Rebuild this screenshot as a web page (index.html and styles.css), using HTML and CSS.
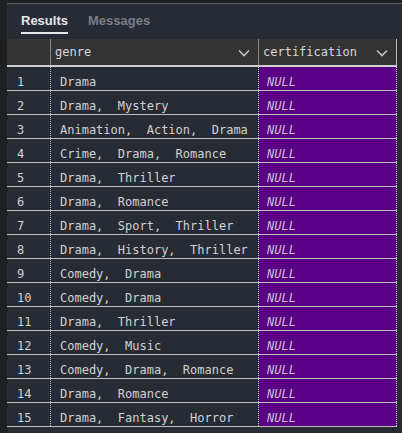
FILE: index.html
```html
<!DOCTYPE html>
<html>
<head>
<meta charset="utf-8">
<link rel="stylesheet" href="styles.css">
</head>
<body>
<div class="panel">
  <div class="tabs">
    <div class="tab active">Results</div>
    <div class="tab">Messages</div>
  </div>
  <div class="grid">
    <div class="hrow">
      <div class="hcell num"></div>
      <div class="hcell genre"><span>genre</span><svg class="chev" width="12" height="8" viewBox="0 0 12 8"><path d="M1 1.5 L6 6.5 L11 1.5" fill="none" stroke="#c4c4c4" stroke-width="1.6"/></svg></div>
      <div class="hcell cert"><span>certification</span><svg class="chev" width="12" height="8" viewBox="0 0 12 8"><path d="M1 1.5 L6 6.5 L11 1.5" fill="none" stroke="#c4c4c4" stroke-width="1.6"/></svg></div>
    </div>
    <div class="row"><div class="cell num">1</div><div class="cell genre">Drama</div><div class="cell cert">NULL</div></div>
    <div class="row"><div class="cell num">2</div><div class="cell genre">Drama,  Mystery</div><div class="cell cert">NULL</div></div>
    <div class="row"><div class="cell num">3</div><div class="cell genre">Animation,  Action,  Drama</div><div class="cell cert">NULL</div></div>
    <div class="row"><div class="cell num">4</div><div class="cell genre">Crime,  Drama,  Romance</div><div class="cell cert">NULL</div></div>
    <div class="row"><div class="cell num">5</div><div class="cell genre">Drama,  Thriller</div><div class="cell cert">NULL</div></div>
    <div class="row"><div class="cell num">6</div><div class="cell genre">Drama,  Romance</div><div class="cell cert">NULL</div></div>
    <div class="row"><div class="cell num">7</div><div class="cell genre">Drama,  Sport,  Thriller</div><div class="cell cert">NULL</div></div>
    <div class="row"><div class="cell num">8</div><div class="cell genre">Drama,  History,  Thriller</div><div class="cell cert">NULL</div></div>
    <div class="row"><div class="cell num">9</div><div class="cell genre">Comedy,  Drama</div><div class="cell cert">NULL</div></div>
    <div class="row"><div class="cell num">10</div><div class="cell genre">Comedy,  Drama</div><div class="cell cert">NULL</div></div>
    <div class="row"><div class="cell num">11</div><div class="cell genre">Drama,  Thriller</div><div class="cell cert">NULL</div></div>
    <div class="row"><div class="cell num">12</div><div class="cell genre">Comedy,  Music</div><div class="cell cert">NULL</div></div>
    <div class="row"><div class="cell num">13</div><div class="cell genre">Comedy,  Drama,  Romance</div><div class="cell cert">NULL</div></div>
    <div class="row"><div class="cell num">14</div><div class="cell genre">Drama,  Romance</div><div class="cell cert">NULL</div></div>
    <div class="row"><div class="cell num">15</div><div class="cell genre">Drama,  Fantasy,  Horror</div><div class="cell cert">NULL</div></div>
  </div>
</div>
</body>
</html>
```

FILE: styles.css
```css
html, body {
  margin: 0;
  padding: 0;
  background: #1f2023;
  height: 100%;
  overflow: hidden;
}

.panel {
  margin-left: 7px;
  margin-top: 3px;
  border-top: 1px solid #5a5d63;
  background: #272b33;
  height: 430px;
}

.tabs {
  display: flex;
  gap: 20px;
  height: 35px;
  padding-left: 14px;
  box-sizing: border-box;
  font-family: "Liberation Sans", Arial, sans-serif;
  font-weight: bold;
  font-size: 13px;
}

.tab {
  color: #7b7f87;
  padding-top: 9px;
  line-height: 15px;
  height: 30px;
  box-sizing: border-box;
}

.tab.active {
  color: #e6e6e6;
  border-bottom: 2px solid #e6e6e6;
  height: 30px;
}

.grid {
  width: 390px;
  font-family: "DejaVu Sans Mono", monospace;
  font-size: 12px;
  color: #d2d2d2;
}

.hrow {
  display: grid;
  grid-template-columns: 44px 208px 138px;
  height: 28px;
  background: #333333;
  border-bottom: 2px solid #cfcfcf;
  box-sizing: border-box;
}

.hcell {
  display: flex;
  align-items: center;
  justify-content: space-between;
  border-right: 1px solid #8a8a8a;
  line-height: 25px;
  height: 26px;
  padding-left: 4px;
  padding-right: 8px;
  color: #d8d8d8;
  white-space: pre;
}

.hcell.num {
  border-right-color: #8a8a8a;
}

.hcell.cert {
  border-right-color: #bdbdbd;
}

.chev {
  display: block;
  margin-top: 1px;
}

.row {
  display: grid;
  grid-template-columns: 44px 208px 138px;
  height: 24px;
  border-bottom: 1px solid #bdbdbd;
  box-sizing: border-box;
}

.cell {
  border-right: 1px dotted #d0d0d0;
  padding-top: 7px;
  line-height: 16px;
  white-space: pre;
  overflow: hidden;
}

.cell.num {
  padding-left: 10px;
  border-right-color: #bdbdbd;
}

.cell.genre {
  padding-left: 9px;
}

.cell.cert {
  background: #5a0087;
  padding-left: 8px;
  font-style: italic;
  color: #cbc3d3;
}
```
